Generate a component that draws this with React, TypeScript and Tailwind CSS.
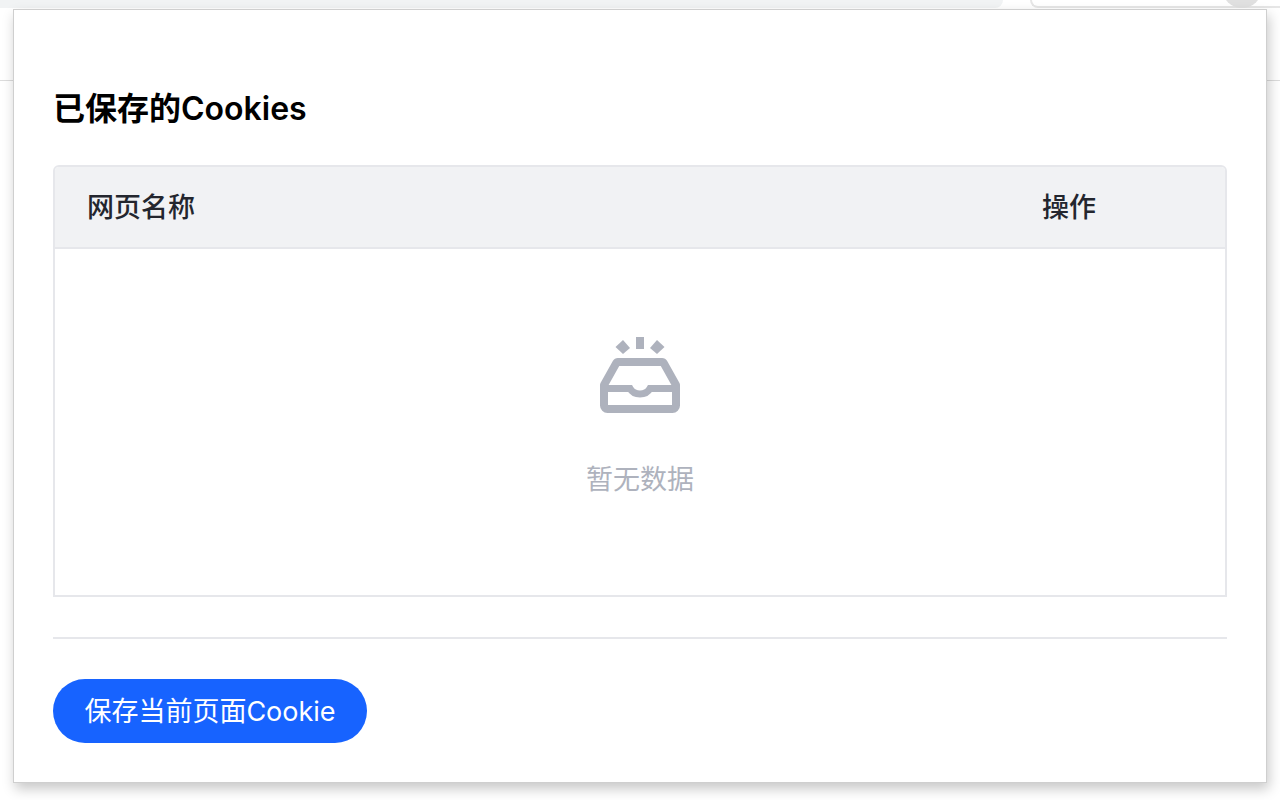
const font = { fontFamily: 'Inter, "Noto Sans CJK SC", sans-serif' }

function EmptyIcon() {
  return (
    <svg width="80" height="76" viewBox="0 0 80 76" fill="none">
      <rect x="36" y="0" width="8" height="12" fill="#aeb2bd" />
      <path d="M15.500 10L23 3l7 8-7 6z" fill="#aeb2bd" />
      <path d="M64.500 10L57 3l-7 8 7 6z" fill="#aeb2bd" />
      <path
        d="M18 25h44a2 2 0 0 1 1.700 1L76 48v20.500a3.500 3.500 0 0 1-3.500 3.500h-65A3.500 3.500 0 0 1 4 68.500V48L16.300 26a2 2 0 0 1 1.700-1z"
        stroke="#aeb2bd"
        strokeWidth="8"
        strokeLinejoin="round"
      />
      <path
        d="M4 51.500h26c2 3.500 5.500 5.500 10 5.500s8-2 10-5.500h26"
        stroke="#aeb2bd"
        strokeWidth="7"
      />
    </svg>
  )
}

export default function App() {
  return (
    <div className="relative h-[800px] w-[1280px] overflow-hidden bg-white" style={font}>
      <div className="h-[81px] border-b border-[#dcdcdc]">
        <div className="flex h-2">
          <div className="w-[1003px] rounded-br-[16px] bg-[#f1f3f4]" />
          <div className="relative ml-[27px] flex-1 rounded-bl-[16px] border-b-2 border-l-2 border-[#e6e6e6]">
            <div className="absolute right-[18px] top-[-32px] size-[40px] rounded-full bg-[#e0e0e0]" />
          </div>
        </div>
      </div>

      <div className="absolute left-[13px] top-[9px] flex h-[774px] w-[1254px] flex-col border border-[#cfcfcf] bg-white px-[39px] pt-[79px] shadow-[2px_6px_12px_rgba(0,0,0,0.22)]">
        <h2 className="text-[32px] leading-[40px] font-semibold text-black">已保存的Cookies</h2>

        <div className="mt-[36px] h-[432px] overflow-hidden rounded-t-md border-2 border-[#e6e7eb]">
          <div className="flex h-[82px] items-center border-b-2 border-[#e6e7eb] bg-[#f1f2f4] pt-[2px] text-[27px] font-medium text-[#23262e]">
            <span className="ml-[32px]">网页名称</span>
            <span className="ml-auto mr-[129px]">操作</span>
          </div>
          <div className="flex flex-col items-center pt-[88px]">
            <EmptyIcon />
            <p className="mt-[49px] text-[27px] leading-[36px] text-[#aeb2bd]">暂无数据</p>
          </div>
        </div>

        <div className="mt-[40px] border-t-2 border-[#e6e7eb]" />

        <button className="mt-[40px] h-[64px] w-[314px] rounded-full bg-[#1763ff] pt-[2px] text-[27px] text-white">
          保存当前页面Cookie
        </button>
      </div>
    </div>
  )
}
